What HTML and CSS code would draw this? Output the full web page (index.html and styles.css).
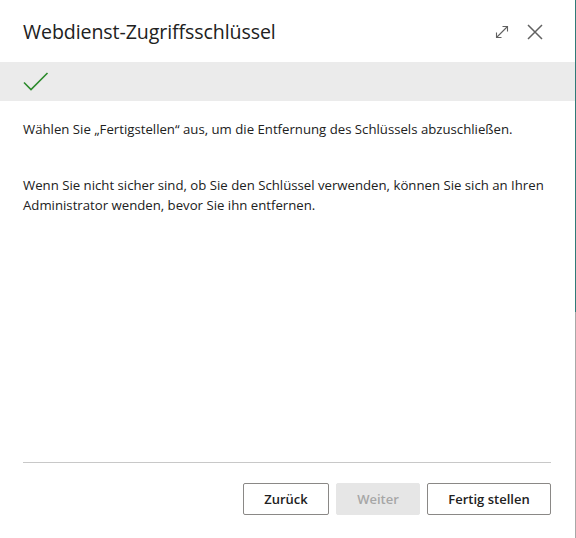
FILE: index.html
```html
<!DOCTYPE html>
<html lang="de">
    <head>
        <meta charset="UTF-8">
        <meta name="viewport" content="width=device-width, initial-scale=1.0">
        <title>Webdienst-Zugriffsschlüssel</title>
        <link rel="stylesheet" href="styles.css">
    </head>
    <body>
        <div class="dialog">
            <header class="dialog-header">
                <h1>Webdienst-Zugriffsschlüssel</h1>
                <div class="header-actions">
                    <button class="icon-btn" title="Maximieren">
                        <svg width="16" height="16" viewBox="0 0 16 16" fill="none" stroke="#616161" stroke-width="1.1">
                            <path d="M2.5 13.5 L13.5 2.5"/>
                            <path d="M8.5 2.5 H13.5 V7.5"/>
                            <path d="M2.5 8.5 V13.5 H7.5"/>
                        </svg>
                    </button>
                    <button class="icon-btn" title="Schließen">
                        <svg width="18" height="18" viewBox="0 0 18 18" fill="none" stroke="#616161" stroke-width="1.5">
                            <path d="M2 2 L16 16 M16 2 L2 16"/>
                        </svg>
                    </button>
                </div>
            </header>

            <div class="status-bar">
                <svg width="26" height="20" viewBox="0 0 26 20" fill="none" stroke="#2b8a2b" stroke-width="1.6">
                    <path d="M1 10.5 L8 17.5 L24.5 1"/>
                </svg>
            </div>

            <div class="dialog-body">
                <p>Wählen Sie „Fertigstellen“ aus, um die Entfernung des Schlüssels abzuschließen.</p>
                <p>Wenn Sie nicht sicher sind, ob Sie den Schlüssel verwenden, können Sie sich an Ihren Administrator wenden, bevor Sie ihn entfernen.</p>
            </div>

            <footer class="dialog-footer">
                <button class="btn">Zurück</button>
                <button class="btn" disabled>Weiter</button>
                <button class="btn btn-wide">Fertig stellen</button>
            </footer>
        </div>
    </body>
</html>
```

FILE: styles.css
```css
body {
margin: 0;
padding: 0;
background-color: #ffffff;
font-family: "Open Sans", "Noto Sans", sans-serif;
color: #212121;
}

.dialog {
width: 576px;
height: 538px;
box-sizing: border-box;
border-right: 1px solid;
border-image: linear-gradient(#2f7b78 0%, #2f7b78 58%, #a8a8a8 58%, #a8a8a8 100%) 1;
display: flex;
flex-direction: column;
}

/* Header */
.dialog-header {
height: 62px;
display: flex;
align-items: center;
justify-content: space-between;
padding: 0 31px 0 23px;
}

.dialog-header h1 {
margin: 0;
font-size: 19.6px;
font-weight: 500;
letter-spacing: -0.1px;
}

.header-actions {
display: flex;
align-items: center;
gap: 16px;
margin-top: 1px;
}

.icon-btn {
background: none;
border: none;
padding: 0;
display: flex;
cursor: pointer;
}

/* Status bar */
.status-bar {
height: 39px;
background-color: #ebebeb;
display: flex;
align-items: center;
padding-left: 23px;
}

/* Body */
.dialog-body {
flex: 1;
padding: 18px 23px 0 23px;
font-size: 13.2px;
line-height: 20px;
}

.dialog-body p {
margin: 0 0 36px 0;
}

/* Footer */
.dialog-footer {
margin: 0 24px 0 23px;
border-top: 1px solid #c8c8c8;
padding: 20px 0 23px 0;
display: flex;
justify-content: flex-end;
gap: 7px;
}

.btn {
height: 32px;
min-width: 86px;
padding: 0 16px;
background-color: #ffffff;
border: 1px solid #8a8886;
border-radius: 2px;
font-family: inherit;
font-size: 13px;
font-weight: 600;
color: #212121;
cursor: pointer;
}

.btn:disabled {
background-color: #e6e6e6;
border-color: #e6e6e6;
color: #a6a6a6;
min-width: 84px;
cursor: default;
}

.btn-wide {
min-width: 124px;
}
```
